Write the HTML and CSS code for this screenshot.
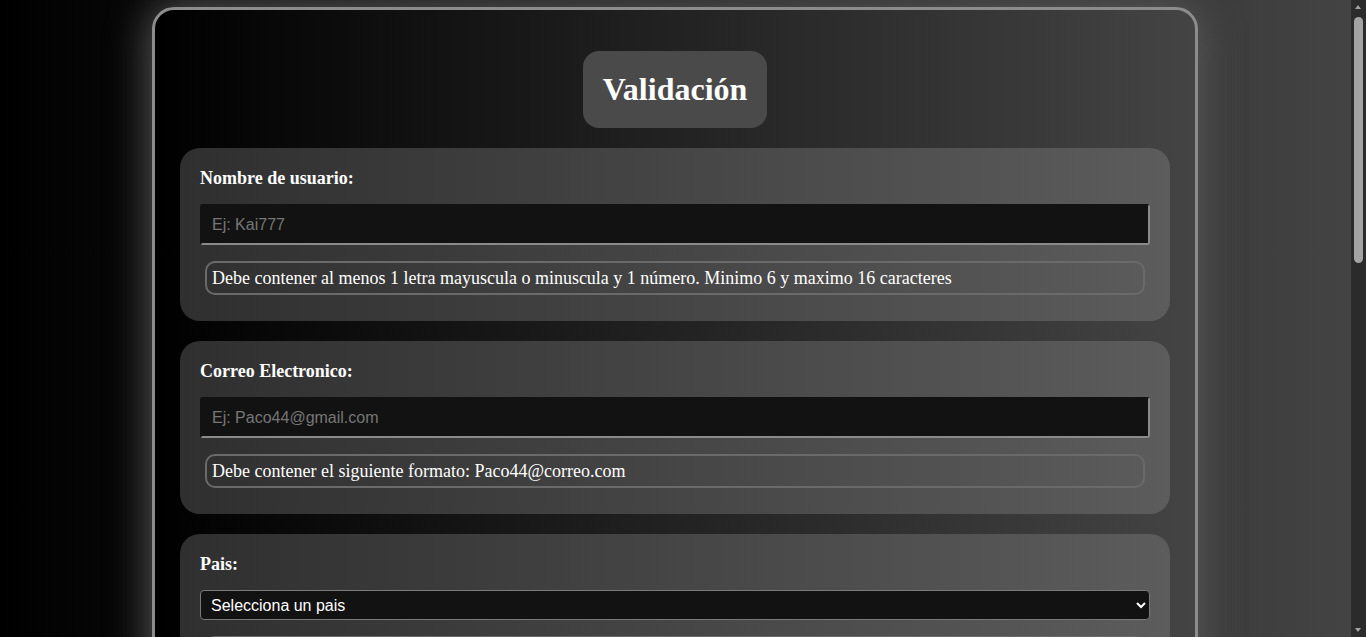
FILE: index.html
```html
<!DOCTYPE html>
<html lang="es">
<head>
<meta charset="utf-8">
<title>Validación</title>
<link rel="stylesheet" href="styles.css">
</head>
<body>
<main class="container">
  <h1 class="title">Validación</h1>
  <form class="form">
    <div class="card">
      <label class="label" for="usuario">Nombre de usuario:</label>
      <input class="field" id="usuario" type="text" placeholder="Ej: Kai777">
      <p class="hint">Debe contener al menos 1 letra mayuscula o minuscula y 1 número. Minimo 6 y maximo 16 caracteres</p>
    </div>
    <div class="card">
      <label class="label" for="correo">Correo Electronico:</label>
      <input class="field" id="correo" type="text" placeholder="Ej: Paco44@gmail.com">
      <p class="hint">Debe contener el siguiente formato: Paco44@correo.com</p>
    </div>
    <div class="card">
      <label class="label" for="pais">Pais:</label>
      <select class="select" id="pais">
        <option>Selecciona un pais</option>
        <option>México</option>
        <option>España</option>
        <option>Argentina</option>
      </select>
      <p class="hint">Debe seleccionar un pais de la lista</p>
    </div>
    <div class="card">
      <label class="label" for="pass">Contraseña:</label>
      <input class="field" id="pass" type="password" placeholder="Ej: Contraseña123">
      <p class="hint">Debe contener al menos 1 letra mayuscula, 1 minuscula y 1 número. Minimo 8 caracteres</p>
    </div>
    <div class="card">
      <label class="label" for="pass2">Confirmar contraseña:</label>
      <input class="field" id="pass2" type="password" placeholder="Repite tu contraseña">
      <p class="hint">Las contraseñas deben coincidir</p>
    </div>
    <div class="card">
      <label class="label" for="tel">Telefono:</label>
      <input class="field" id="tel" type="text" placeholder="Ej: 5512345678">
      <p class="hint">Debe contener 10 digitos</p>
    </div>
    <div class="card">
      <label class="label" for="edad">Edad:</label>
      <input class="field" id="edad" type="text" placeholder="Ej: 25">
      <p class="hint">Debe ser mayor de 18 años</p>
    </div>
    <button class="submit" type="button">Enviar</button>
  </form>
</main>
<div class="scrollbar" aria-hidden="true">
  <span class="arrow-up"></span>
  <span class="thumb"></span>
  <span class="arrow-down"></span>
</div>
</body>
</html>
```

FILE: styles.css
```css
html {
  color-scheme: dark;
}

body {
  margin: 0 16px 0 0;
  min-height: 100vh;
  background: linear-gradient(to right, #000, #444);
  font-family: "Liberation Serif", "Times New Roman", serif;
  font-size: 18px;
  color: #fff;
}

.container {
  margin: 7px auto 8px;
  padding: 20px 25px 20px;
  box-sizing: content-box;
  width: 990px;
  border: 3px solid #8c8c8c;
  border-radius: 22px;
  background: linear-gradient(to right, #000, #444);
  box-shadow: 0 0 40px 2px #5a5a5a;
}

.title {
  width: fit-content;
  margin: 21px auto 20px;
  padding: 20px 20px;
  font-size: 32px;
  line-height: 37px;
  font-weight: bold;
  background: #4a4a4a;
  border-radius: 16px;
  color: #fff;
}

.form {
  display: flex;
  flex-direction: column;
  gap: 20px;
}

.card {
  display: flex;
  flex-direction: column;
  padding: 20px 20px 26px;
  border-radius: 20px;
  background: linear-gradient(to right, #2f2f2f, #5c5c5c);
}

.label {
  font-weight: bold;
  font-size: 18px;
  line-height: 21px;
  margin-bottom: 15px;
}

.field {
  box-sizing: border-box;
  width: 100%;
  height: 41px;
  padding: 0 10px;
  margin: 0;
  background: #121212;
  color: #fff;
  font-family: "Liberation Sans", Arial, sans-serif;
  font-size: 16px;
  border-style: solid;
  border-width: 2px;
  border-color: #121212 #8a8a8a #8a8a8a #121212;
  border-radius: 3px;
  outline: none;
}

.field::placeholder {
  color: #767676;
}

.select {
  box-sizing: border-box;
  width: 100%;
  height: 30px;
  padding: 0 6px;
  margin: 0;
  background: #121212;
  color: #fff;
  font-family: "Liberation Sans", Arial, sans-serif;
  font-size: 16px;
  border: 1px solid #7a7a7a;
  border-radius: 4px;
}

.hint {
  margin: 16px 5px 0;
  padding: 5px 5px;
  border: 2px solid #6a6a6a;
  border-radius: 10px;
  font-size: 18px;
  line-height: 20px;
  color: #fff;
}

.submit {
  align-self: center;
  padding: 10px 30px;
  font-family: "Liberation Serif", serif;
  font-size: 18px;
  font-weight: bold;
  color: #fff;
  background: #4a4a4a;
  border: 2px solid #8a8a8a;
  border-radius: 12px;
}

.scrollbar {
  position: fixed;
  top: 0;
  right: 0;
  width: 15px;
  height: 100vh;
  background: #2b2b2b;
}

.arrow-up,
.arrow-down {
  position: absolute;
  left: 4px;
  width: 0;
  height: 0;
  border-left: 3.5px solid transparent;
  border-right: 3.5px solid transparent;
}

.arrow-up {
  top: 5px;
  border-bottom: 4px solid #a3a3a3;
}

.arrow-down {
  bottom: 5px;
  border-top: 4px solid #a3a3a3;
}

.thumb {
  position: absolute;
  top: 17px;
  left: 3px;
  width: 9px;
  height: 246px;
  border-radius: 5px;
  background: #a3a3a3;
}
```
